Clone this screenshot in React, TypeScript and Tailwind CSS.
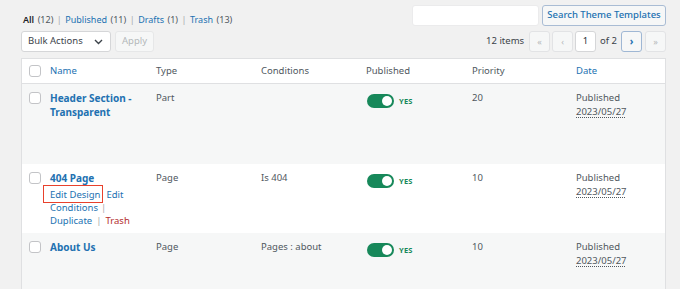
const rows = [
  {
    name: ["Header Section -", "Transparent"],
    type: "Part",
    conditions: "",
    priority: "20",
    bg: "bg-[#f6f7f7]",
    h: "h-[80px]",
    actions: false,
  },
  {
    name: ["404 Page"],
    type: "Page",
    conditions: "Is 404",
    priority: "10",
    bg: "bg-white",
    h: "h-[69px]",
    actions: true,
  },
  {
    name: ["About Us"],
    type: "Page",
    conditions: "Pages : about",
    priority: "10",
    bg: "bg-[#f6f7f7]",
    h: "h-[70px]",
    actions: false,
  },
];

function Checkbox() {
  return <div className="ml-[7px] w-[12px] h-[12px] rounded-[3px] border border-[#c3c4c7] bg-white" />;
}

function Toggle() {
  return (
    <div className="flex items-center gap-[5px]">
      <div className="w-[27px] h-[14px] rounded-full bg-[#17885a] flex items-center justify-end pr-[2px]">
        <div className="w-[10px] h-[10px] rounded-full bg-white" />
      </div>
      <span className="text-[7.5px] font-bold text-[#17885a] tracking-[0.2px]">YES</span>
    </div>
  );
}

function PageBtn({ label, active }: { label: string; active?: boolean }) {
  return (
    <div
      className={
        active
          ? "w-[21px] h-[21px] flex items-center justify-center rounded-[3px] border border-[#9fb7d4] bg-[#f6f7f7] text-[#2271b1] font-bold text-[10px]"
          : "w-[21px] h-[21px] flex items-center justify-center rounded-[3px] border border-[#e2e3e5] bg-[#f6f7f7] text-[#b4b7ba] text-[9px]"
      }
    >
      {label}
    </div>
  );
}

const grid = "grid grid-cols-[28px_106px_105px_105px_106px_104px_1fr]";

export default function App() {
  return (
    <div
      className="w-[680px] h-[289px] overflow-hidden bg-[#f1f1f1] pl-[21px] pr-[14px] pt-[5px] text-[9.5px] text-[#50575e]"
      style={{ fontFamily: '"Noto Sans", "Open Sans", sans-serif' }}
    >
      {/* top: views + search */}
      <div className="flex justify-between items-start h-[21px]">
        <div className="pt-[8px] pl-[2px] leading-[14px] flex gap-[3.5px] text-[9px] whitespace-nowrap">
          <span className="text-[#1d2327] font-semibold">All</span>
          <span>(12)</span>
          <span className="text-[#a7aaad]">|</span>
          <span className="text-[#2271b1]">Published</span>
          <span>(11)</span>
          <span className="text-[#a7aaad]">|</span>
          <span className="text-[#2271b1]">Drafts</span>
          <span>(1)</span>
          <span className="text-[#a7aaad]">|</span>
          <span className="text-[#2271b1]">Trash</span>
          <span>(13)</span>
        </div>
        <div className="flex gap-[3px]">
          <div className="w-[127px] h-[21px] bg-white border border-[#ebebec] rounded-[3px]" />
          <div className="w-[124px] h-[21px] flex items-center justify-center rounded-[3px] border border-[#a9bcd4] bg-[#f6f7f7] text-[#2271b1] font-medium">
            Search Theme Templates
          </div>
        </div>
      </div>

      {/* bulk actions + pagination */}
      <div className="mt-[5px] flex justify-between items-center h-[21px]">
        <div className="flex gap-[4px]">
          <div className="w-[90px] h-[21px] bg-white border border-[#d5d6d8] rounded-[3px] flex items-center justify-between pl-[6px] pr-[7px] text-[#3c434a]">
            <span>Bulk Actions</span>
            <svg width="9" height="6" viewBox="0 0 9 6" fill="none">
              <path d="M1 1l3.5 3.5L8 1" stroke="#3c434a" strokeWidth="1.4" />
            </svg>
          </div>
          <div className="w-[39px] h-[21px] rounded-[3px] border border-[#e6e7e8] bg-[#f6f7f7] text-[#b4b7ba] flex items-center justify-center">
            Apply
          </div>
        </div>
        <div className="flex items-center">
          <span className="mr-[5px] text-[#3c434a]">12 items</span>
          <PageBtn label="«" />
          <div className="w-[2px]" />
          <PageBtn label="‹" />
          <div className="ml-[2px] w-[21px] h-[21px] bg-white border border-[#d5d6d8] rounded-[3px] flex items-center justify-center text-[#2c3338]">
            1
          </div>
          <span className="mx-[4px] text-[#3c434a]">of 2</span>
          <PageBtn label="›" active />
          <div className="w-[3px]" />
          <PageBtn label="»" />
        </div>
      </div>

      {/* table */}
      <div className="mt-[6px] border border-[#dfe0e2] bg-white">
        <div className={`${grid} h-[25px] items-center border-b border-[#dfe0e2] bg-white`}>
          <Checkbox />
          <span className="text-[#2271b1]">Name</span>
          <span>Type</span>
          <span>Conditions</span>
          <span>Published</span>
          <span>Priority</span>
          <span className="text-[#2271b1]">Date</span>
        </div>
        {rows.map((r, i) => (
          <div key={i} className={`${grid} ${r.bg} ${r.h} items-start pt-[7px] leading-[14px]`}>
            <div className="pt-[1px]">
              <Checkbox />
            </div>
            <div className="flex flex-col">
              {r.name.map((n) => (
                <span key={n} className="text-[#2271b1] font-bold text-[10px]">
                  {n}
                </span>
              ))}
              {r.actions && (
                <div className="flex flex-col text-[#2271b1] leading-[13px] mt-[3px]">
                  <div className="flex gap-[6px]">
                    <span className="relative">
                      Edit Design
                      <span className="absolute -left-[7px] -right-[3px] -top-[3px] -bottom-[2px] border-[1.5px] border-[#e8412c]" />
                    </span>
                    <span>Edit</span>
                  </div>
                  <div className="flex gap-[3px]">
                    <span>Conditions</span>
                    <span className="text-[#a7aaad]">|</span>
                  </div>
                  <div className="flex gap-[4px]">
                    <span>Duplicate</span>
                    <span className="text-[#a7aaad]">|</span>
                    <span className="text-[#b32d2e]">Trash</span>
                  </div>
                </div>
              )}
            </div>
            <span>{r.type}</span>
            <span>{r.conditions}</span>
            <div className="pt-[3px] pl-[1px]">
              <Toggle />
            </div>
            <span>{r.priority}</span>
            <div className="flex flex-col">
              <span>Published</span>
              <span className="underline decoration-dotted underline-offset-2">2023/05/27</span>
            </div>
          </div>
        ))}
      </div>
    </div>
  );
}
